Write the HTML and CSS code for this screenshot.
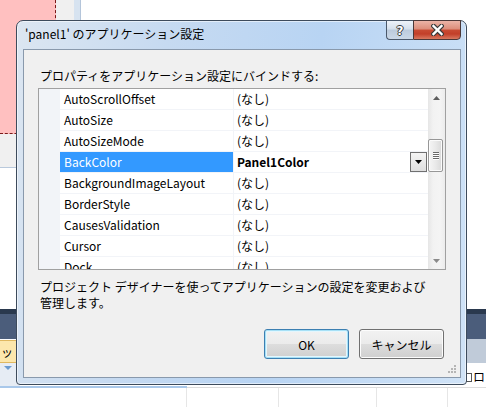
FILE: index.html
```html
<!DOCTYPE html>
<html lang="ja">
<head>
<meta charset="utf-8">
<title>panel1 アプリケーション設定</title>
<link rel="stylesheet" href="styles.css">
</head>
<body>
<div class="screen">
  <div class="bg-panel"></div>
  <div class="bg-strip"></div>
  <div class="bg-pink"></div>
  <div class="bg-band"></div>
  <div class="bg-lightbar"></div>
  <div class="bg-tab">ット</div>
  <div class="bg-tabstrip"><span class="bg-tri"></span></div>
  <div class="bg-blueline"></div>
  <div class="bg-grayline"></div>
  <div class="bg-vline v1"></div>
  <div class="bg-vline v2"></div>
  <div class="bg-vline v3"></div>
  <div class="bg-vline v4"></div>
  <div class="bg-rozi"><span class="bg-box"></span>ロジ</div>

  <div class="dialog">
    <div class="titlebar">
      <div class="title">'panel1' のアプリケーション設定</div>
      <div class="caption">
        <div class="cap-help"><span class="q">?</span></div>
        <div class="cap-close">
          <svg width="13" height="12" viewBox="0 0 13 12">
            <path d="M2.5 2 L10.5 10 M10.5 2 L2.5 10" stroke="#3a3a3a" stroke-width="4.6" stroke-linecap="square" fill="none"/>
            <path d="M2.5 2 L10.5 10 M10.5 2 L2.5 10" stroke="#ffffff" stroke-width="2.4" stroke-linecap="square" fill="none"/>
          </svg>
        </div>
      </div>
    </div>
    <div class="client">
      <div class="label">プロパティをアプリケーション設定にバインドする:</div>
      <div class="grid">
        <div class="list">
          <div class="row"><div class="gutter"></div><div class="name">AutoScrollOffset</div><div class="value">(なし)</div></div>
          <div class="row"><div class="gutter"></div><div class="name">AutoSize</div><div class="value">(なし)</div></div>
          <div class="row"><div class="gutter"></div><div class="name">AutoSizeMode</div><div class="value">(なし)</div></div>
          <div class="row sel"><div class="gutter"></div><div class="name">BackColor</div><div class="value"><b>Panel1Color</b>
            <span class="dd"><svg width="7" height="4" viewBox="0 0 7 4"><path d="M0 0 H7 L3.5 4 Z" fill="#000"/></svg></span></div></div>
          <div class="row"><div class="gutter"></div><div class="name">BackgroundImageLayout</div><div class="value">(なし)</div></div>
          <div class="row"><div class="gutter"></div><div class="name">BorderStyle</div><div class="value">(なし)</div></div>
          <div class="row"><div class="gutter"></div><div class="name">CausesValidation</div><div class="value">(なし)</div></div>
          <div class="row"><div class="gutter"></div><div class="name">Cursor</div><div class="value">(なし)</div></div>
          <div class="row"><div class="gutter"></div><div class="name">Dock</div><div class="value">(なし)</div></div>
        </div>
        <div class="vscroll">
          <div class="arrow"><svg width="7" height="4" viewBox="0 0 7 4"><path d="M0 4 H7 L3.5 0 Z" fill="#5e5e5e"/></svg></div>
          <div class="thumb"><span></span><span></span><span></span><span></span></div>
          <div class="arrow down"><svg width="7" height="4" viewBox="0 0 7 4"><path d="M0 0 H7 L3.5 4 Z" fill="#8a8a8a"/></svg></div>
        </div>
      </div>
      <div class="desc">プロジェクト デザイナーを使ってアプリケーションの設定を変更および<br>管理します。</div>
      <div class="actions">
        <button class="btn default">OK</button>
        <button class="btn">キャンセル</button>
      </div>
      <svg class="grip" width="9" height="9" viewBox="0 0 9 9">
        <g fill="#b5b5b5">
          <rect x="6" y="0" width="2" height="2"/>
          <rect x="3" y="3" width="2" height="2"/><rect x="6" y="3" width="2" height="2"/>
          <rect x="0" y="6" width="2" height="2"/><rect x="3" y="6" width="2" height="2"/><rect x="6" y="6" width="2" height="2"/>
        </g>
      </svg>
    </div>
  </div>
</div>
</body>
</html>
```
FILE: styles.css
```css
* { box-sizing: border-box; }
body {
  margin: 0;
  font-family: "Noto Sans CJK JP", "Noto Sans", sans-serif;
  font-size: 12px;
  color: #000;
}
.screen {
  position: relative;
  width: 486px;
  height: 407px;
  overflow: hidden;
  background: #fff;
}

/* background application (canvas behind the modal window) */
.bg-panel { position: absolute; left: 0; top: 0; width: 74px; height: 168px; background: #f0f0f0; border-bottom: 1px solid #b9c9dc; }
.bg-strip { position: absolute; left: 74px; top: 0; width: 7px; height: 168px; background: #d7e3f0; border-right: 1px solid #b4c5da; }
.bg-pink { position: absolute; left: 0; top: 0; width: 56px; height: 134px; background: #ffc0c0; border-right: 1px dashed #7a1a1a; border-bottom: 1px dashed #7a1a1a; }
.bg-band { position: absolute; left: 0; top: 309px; width: 486px; height: 30px; background: linear-gradient(#2a394e 0, #2a394e 5px, #4b5d7b 5px, #4b5d7b 100%); }
.bg-lightbar { position: absolute; left: 460px; top: 339px; width: 26px; height: 24px; background: #c0cbd9; }
.bg-tab { position: absolute; left: -2px; top: 340px; width: 22px; height: 23px; background: #fce7ad; border: 1px solid #e0b860; line-height: 21px; padding-left: 2px; white-space: nowrap; overflow: hidden; }
.bg-tabstrip { position: absolute; left: 0; top: 363px; width: 20px; height: 23px; background: #e6ecf4; }
.bg-tri { position: absolute; left: 4px; top: 3px; width: 0; height: 0; border-left: 4px solid transparent; border-right: 4px solid transparent; border-top: 4px solid #6a9bd0; }
.bg-blueline { position: absolute; left: 0; top: 386px; width: 187px; height: 2px; background: #a9c8ea; }
.bg-grayline { position: absolute; left: 187px; top: 387px; width: 300px; height: 1px; background: #dcdcdc; }
.bg-vline { position: absolute; top: 388px; width: 1px; height: 19px; background: #e6e6e6; }
.v1 { left: 186px; } .v2 { left: 278px; } .v3 { left: 376px; } .v4 { left: 447px; }
.bg-rozi { position: absolute; left: 466px; top: 369px; line-height: 16px; display: flex; align-items: center; gap: 1px; white-space: nowrap; }
.bg-box { width: 6px; height: 9px; border: 1px solid #555; border-left: none; background: #fff; }

/* modal window */
.dialog {
  position: absolute;
  left: 16px;
  top: 20px;
  width: 451px;
  height: 365px;
  border: 1px solid #3d4b5c;
  border-radius: 7px 7px 4px 4px;
  background: linear-gradient(100deg, #dce6f1 0%, #c6daf1 30%, #b8d4f3 60%, #d0e3f7 100%);
  box-shadow: inset 0 0 0 1px rgba(255,255,255,0.55);
  padding: 0 5px 6px 6px;
  display: flex;
  flex-direction: column;
}
.titlebar { height: 28px; display: flex; align-items: flex-start; padding-left: 2px; flex: none; }
.title { flex: 1; margin-top: 5px; line-height: 16px; white-space: nowrap; }
.caption { display: flex; margin-top: -1px; }
.cap-help {
  width: 27px; height: 20px;
  border: 1px solid #4a586a; border-right: none;
  border-radius: 0 0 0 4px;
  background: linear-gradient(#eef3f9 0%, #d5e0ec 45%, #bccbdc 50%, #cbd8e7 100%);
  display: flex; align-items: center; justify-content: center;
}
.q {
  font-family: "DejaVu Sans", sans-serif; font-weight: bold; font-size: 12px; line-height: 12px;
  color: #fff;
  text-shadow: 1px 0 0 #3a3a3a, -1px 0 0 #3a3a3a, 0 1px 0 #3a3a3a, 0 -1px 0 #3a3a3a;
  margin-top: 1px;
}
.cap-close {
  width: 48px; height: 20px;
  border: 1px solid #4b3838;
  border-radius: 0 0 4px 0;
  background: linear-gradient(#ebb4a7 0%, #dc8d7a 45%, #c84b33 50%, #c23f29 72%, #d9785f 100%);
  display: flex; align-items: center; justify-content: center;
}

.client {
  flex: 1;
  position: relative;
  border: 1px solid #8999ac;
  background: #f0f0f0;
  display: flex;
  flex-direction: column;
  padding: 18px 14px 0;
}
.label { line-height: 16px; margin-left: 2px; white-space: nowrap; }
.grid {
  margin-top: 4px;
  height: 182px;
  flex: none;
  border: 1px solid #a0a0a0;
  background: #fff;
  display: flex;
}
.list { flex: 1; overflow: hidden; }
.row { display: flex; height: 21px; }
.gutter { width: 21px; background: #f2f4f8; flex: none; }
.name {
  width: 174px; flex: none;
  padding-left: 4px;
  line-height: 20px;
  border-right: 1px solid #f2f4f8;
  border-bottom: 1px solid #f2f4f8;
  white-space: nowrap;
}
.value {
  flex: 1;
  padding-left: 3px;
  line-height: 20px;
  border-bottom: 1px solid #f2f4f8;
  display: flex;
  align-items: flex-start;
  white-space: nowrap;
}
.sel .name { background: #3399ff; color: #fff; }
.value b { font-weight: bold; }
.dd {
  margin-left: auto; margin-right: 1px;
  width: 17px; height: 20px;
  border: 1px solid #707070;
  background: linear-gradient(#f4f4f4, #dedede);
  display: flex; align-items: center; justify-content: center;
}
.vscroll {
  width: 17px; flex: none;
  background: linear-gradient(to right, #e6e6e6, #f2f2f2 30%, #f4f4f4 70%, #ececec);
  display: flex; flex-direction: column;
}
.arrow { height: 17px; display: flex; align-items: center; justify-content: center; }
.arrow.down { margin-top: auto; }
.thumb {
  margin-top: 33px;
  width: 15px; height: 33px;
  border: 1px solid #979797;
  border-radius: 2px;
  background: linear-gradient(to right, #f5f5f5, #e9e9e9 50%, #d9d9d9);
  box-shadow: inset 0 0 0 1px #fbfbfb;
  display: flex; flex-direction: column; align-items: center; justify-content: center; gap: 1px;
}
.thumb span { width: 6px; height: 1px; background: #6a6a6a; box-shadow: 0 1px 0 #fff; }
.desc { margin: 9px 0 0 2px; line-height: 16px; white-space: nowrap; }
.actions { display: flex; justify-content: flex-end; gap: 10px; margin-top: 18px; padding-right: 2px; }
.btn {
  width: 85px; height: 30px;
  border: 1px solid #707070;
  border-radius: 3px;
  background: linear-gradient(#f2f2f2 0%, #ebebeb 50%, #dddddd 50%, #cfcfcf 100%);
  box-shadow: inset 0 0 0 1px #fcfcfc;
  font-family: inherit; font-size: 12px; color: #000;
  padding: 0;
  display: flex; align-items: center; justify-content: center;
}
.btn.default { border-color: #3c7fb1; box-shadow: inset 0 0 0 1px #a6e0f6, inset 0 0 0 2px #e4f6fd; }
.grip { position: absolute; right: 3px; bottom: 3px; }
```
